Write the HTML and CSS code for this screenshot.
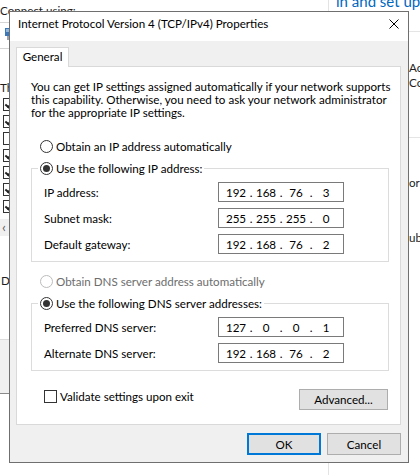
FILE: index.html
```html
<!DOCTYPE html>
<html lang="en">
<head>
    <meta charset="UTF-8">
    <title>Internet Protocol Version 4 (TCP/IPv4) Properties</title>
    <link rel="stylesheet" href="styles.css">
</head>
<body>
    <div class="desk">
        <!-- window behind the dialog -->
        <div class="bg-left">
            <div class="bl-label">Connect using:</div>
            <div class="bl-body">
                <div class="bl-adapter">
                    <svg class="adapter-ico" width="14" height="12" viewBox="0 0 14 12">
                        <rect x="0" y="0" width="14" height="8" fill="#3a78b8"/>
                        <rect x="1" y="1" width="12" height="3" fill="#8fb7df"/>
                        <rect x="2" y="8" width="10" height="4" fill="#9aa3ad"/>
                    </svg>
                </div>
                <p class="bl-caption">Th</p>
                <ul class="bl-list">
                    <li><span class="bl-check on"></span></li>
                    <li><span class="bl-check on"></span></li>
                    <li><span class="bl-check"></span></li>
                    <li><span class="bl-check on"></span></li>
                    <li><span class="bl-check on"></span></li>
                    <li><span class="bl-check on"></span></li>
                    <li><span class="bl-check on"></span></li>
                </ul>
                <div class="bl-scroll">&#8249;</div>
                <div class="bl-desc"><span class="desc-line"></span>D</div>
                <div class="bl-foot"></div>
            </div>
        </div>
        <div class="bg-right">
            <div class="br-top"><div class="br-link">in and set up</div></div>
            <div class="br-acc">Acc<br>Cor</div>
            <div class="br-sep"></div>
            <div class="br-line br-or">or <span class="warn">:</span></div>
            <div class="br-line br-ub">ub</div>
        </div>

        <!-- the dialog -->
        <div class="dialog">
            <div class="titlebar">
                <span class="title">Internet Protocol Version 4 (TCP/IPv4) Properties</span>
                <svg class="close" width="10" height="10" viewBox="0 0 10 10">
                    <path d="M0.5 0.5L9.5 9.5M9.5 0.5L0.5 9.5" stroke="#000" stroke-width="1"/>
                </svg>
            </div>
            <div class="body">
                <div class="tabs">
                    <div class="tab">General</div>
                </div>
                <div class="panel">
                    <p class="intro">You can get IP settings assigned automatically if your network supports<br>this capability. Otherwise, you need to ask your network administrator<br>for the appropriate IP settings.</p>

                    <div class="opt"><span class="radio"></span>Obtain an IP address automatically</div>
                    <div class="group">
                        <div class="group-head"><span class="radio on"></span>Use the following IP address:</div>
                        <div class="field">
                            <span class="field-label">IP address:</span>
                            <div class="ip"><span class="octet">192</span><span class="dot">.</span><span class="octet">168</span><span class="dot">.</span><span class="octet">76</span><span class="dot">.</span><span class="octet">3</span></div>
                        </div>
                        <div class="field">
                            <span class="field-label">Subnet mask:</span>
                            <div class="ip"><span class="octet">255</span><span class="dot">.</span><span class="octet">255</span><span class="dot">.</span><span class="octet">255</span><span class="dot">.</span><span class="octet">0</span></div>
                        </div>
                        <div class="field">
                            <span class="field-label">Default gateway:</span>
                            <div class="ip"><span class="octet">192</span><span class="dot">.</span><span class="octet">168</span><span class="dot">.</span><span class="octet">76</span><span class="dot">.</span><span class="octet">2</span></div>
                        </div>
                    </div>

                    <div class="opt opt-dns disabled"><span class="radio"></span>Obtain DNS server address automatically</div>
                    <div class="group">
                        <div class="group-head"><span class="radio on"></span>Use the following DNS server addresses:</div>
                        <div class="field">
                            <span class="field-label">Preferred DNS server:</span>
                            <div class="ip"><span class="octet">127</span><span class="dot">.</span><span class="octet">0</span><span class="dot">.</span><span class="octet">0</span><span class="dot">.</span><span class="octet">1</span></div>
                        </div>
                        <div class="field">
                            <span class="field-label">Alternate DNS server:</span>
                            <div class="ip"><span class="octet">192</span><span class="dot">.</span><span class="octet">168</span><span class="dot">.</span><span class="octet">76</span><span class="dot">.</span><span class="octet">2</span></div>
                        </div>
                    </div>

                    <div class="panel-foot">
                        <label class="check"><span class="checkbox"></span>Validate settings upon exit</label>
                        <button class="btn btn-adv">Advanced...</button>
                    </div>
                </div>
                <div class="actions">
                    <button class="btn btn-ok">OK</button>
                    <button class="btn">Cancel</button>
                </div>
            </div>
        </div>
    </div>
</body>
</html>
```

FILE: styles.css
```css
body {
    margin: 0;
    background: #fff;
    font-family: Lato, "Noto Sans", sans-serif;
    font-size: 11.6px;
    color: #000;
}
.desk {
    position: relative;
    display: flex;
    width: 420px;
    height: 475px;
    overflow: hidden;
}

/* background window */
.bg-left {
    width: 328px;
    flex: none;
    color: #1e1e1e;
    white-space: nowrap;
}
.bl-label {
    height: 22px;
    padding-top: 3px;
    line-height: 16px;
    box-sizing: border-box;
    overflow: hidden;
}
.bl-body {
    width: 9px;
    overflow: hidden;
}
.bl-adapter {
    height: 27px;
    border-top: 1px solid #d5d5d5;
    border-bottom: 1px solid #d5d5d5;
    box-sizing: border-box;
    padding: 5px 0 0 5px;
}
.adapter-ico {
    display: block;
}
.bl-caption {
    margin: 31px 0 0;
    line-height: 16px;
}
.bl-list {
    list-style: none;
    margin: 0;
    padding: 0 0 0 3px;
}
.bl-list li {
    height: 17px;
    display: flex;
    align-items: center;
}
.bl-check {
    flex: none;
    width: 13px;
    height: 13px;
    border: 1px solid #333;
    box-sizing: border-box;
    position: relative;
}
.bl-check.on::after {
    content: "";
    position: absolute;
    left: 3px;
    top: 0;
    width: 3px;
    height: 7px;
    border-right: 2px solid #222;
    border-bottom: 2px solid #222;
    transform: rotate(40deg);
}
.bl-scroll {
    height: 17px;
    margin-top: 4px;
    background: #f0f0f0;
    color: #606060;
    line-height: 16px;
    padding-left: 2px;
    font-size: 14px;
}
.bl-desc {
    display: flex;
    align-items: center;
    height: 16px;
    margin-top: 36px;
}
.desc-line {
    width: 4px;
    border-top: 1px solid #dcdcdc;
    margin-right: 1px;
}
.bl-foot {
    height: 55px;
    margin-top: 51px;
    background: #f0f0f0;
    border-top: 1px solid #dcdcdc;
    border-bottom: 1px solid #8a8a8a;
    box-sizing: border-box;
}
.bg-right {
    flex: 1;
    border-left: 1px solid #e3e3e3;
    overflow: hidden;
    white-space: nowrap;
    color: #1e1e1e;
}
.br-top {
    height: 32px;
    border-bottom: 1px solid #e5e5e5;
    box-sizing: border-box;
    overflow: hidden;
}
.br-link {
    margin-top: -6px;
    padding-left: 7px;
    font-size: 15px;
    line-height: 15px;
    color: #0067c0;
}
.br-acc {
    margin-top: 28px;
    padding-left: 80px;
    line-height: 15px;
}
.br-sep {
    margin-top: 47px;
    border-top: 1px solid #e5e5e5;
}
.br-line {
    padding-left: 80px;
    line-height: 15px;
}
.br-or {
    margin-top: 37px;
}
.br-ub {
    margin-top: 40px;
}
.warn {
    color: #d8a200;
}

/* dialog */
.dialog {
    position: absolute;
    left: 9px;
    top: 11px;
    width: 398px;
    height: 450px;
    border: 1px solid #6f6f6f;
    background: #f0f0f0;
    display: flex;
    flex-direction: column;
}
.titlebar {
    height: 29px;
    background: #fff;
    display: flex;
    align-items: flex-start;
    padding: 4px 0 0 8px;
    box-sizing: border-box;
}
.title {
    flex: 1;
    line-height: 16px;
    white-space: nowrap;
}
.close {
    margin: 3px 9px 0 0;
}
.body {
    flex: 1;
    display: flex;
    flex-direction: column;
    padding: 6px 7px 0 6px;
}
.tabs {
    display: flex;
    position: relative;
    z-index: 1;
}
.tab {
    width: 53px;
    height: 20px;
    margin-bottom: -1px;
    box-sizing: border-box;
    background: #fff;
    border: 1px solid #d9d9d9;
    border-bottom: none;
    text-align: center;
    line-height: 18px;
}
.panel {
    background: #fff;
    border: 1px solid #d9d9d9;
    padding: 13px 11px 14px 14px;
}
.intro {
    margin: 0;
    line-height: 13px;
    white-space: nowrap;
}
.opt {
    display: flex;
    align-items: center;
    height: 17px;
    margin-top: 19px;
    padding-left: 9px;
}
.opt-dns {
    margin-top: 11px;
}
.disabled {
    color: #6d6d6d;
}
.radio {
    flex: none;
    width: 13px;
    height: 13px;
    border: 1px solid #333;
    border-radius: 50%;
    box-sizing: border-box;
    background: #fff;
    display: flex;
    align-items: center;
    justify-content: center;
    margin-right: 3px;
}
.disabled .radio {
    border-color: #bcbcbc;
}
.radio.on::after {
    content: "";
    width: 7px;
    height: 7px;
    border-radius: 50%;
    background: #333;
}
.group {
    border: 1px solid #dcdcdc;
    margin-top: 13px;
    padding: 0 12px 7px;
}
.group-head {
    display: flex;
    align-items: center;
    width: max-content;
    height: 17px;
    margin: -9px 0 0 -6px;
    padding: 0 2px;
    background: #fff;
}
.field {
    display: flex;
    align-items: center;
    height: 20px;
    margin-top: 6px;
}
.group-head + .field {
    margin-top: 5px;
}
.field-label {
    width: 174px;
}
.ip {
    display: flex;
    align-items: center;
    height: 20px;
    padding: 0 6px;
    border: 1px solid #7a7a7a;
    box-sizing: border-box;
}
.octet {
    width: 22px;
    text-align: center;
}
.dot {
    width: 8px;
    text-align: center;
}
.panel-foot {
    display: flex;
    justify-content: space-between;
    align-items: flex-start;
    margin-top: 18px;
    padding-left: 13px;
}
.check {
    display: flex;
    align-items: center;
    height: 17px;
    margin-top: -1px;
}
.checkbox {
    width: 13px;
    height: 13px;
    border: 1px solid #333;
    box-sizing: border-box;
    background: #fff;
    margin-right: 3px;
}
.btn {
    width: 74px;
    height: 22px;
    padding: 0;
    background: #e1e1e1;
    border: 1px solid #adadad;
    font: inherit;
    color: #000;
}
.btn-adv {
    width: 89px;
    height: 21px;
    margin-right: 1px;
}
.btn-ok {
    border: 2px solid #0078d7;
}
.actions {
    display: flex;
    justify-content: flex-end;
    gap: 6px;
    margin-top: 8px;
}
```
